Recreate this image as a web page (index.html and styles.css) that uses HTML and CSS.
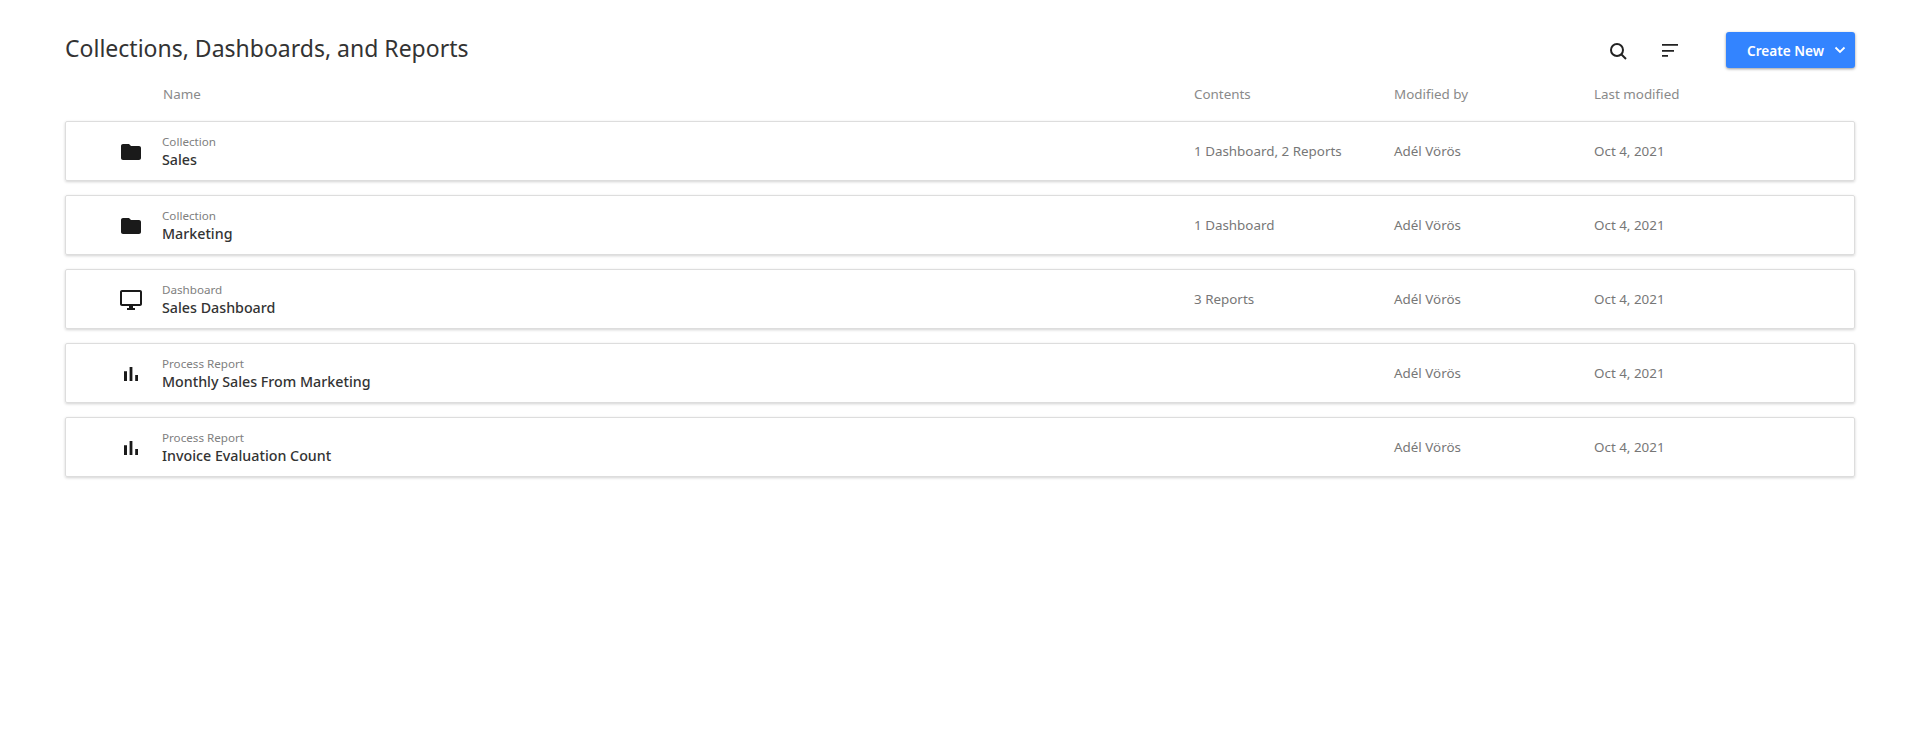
FILE: index.html
```html
<!DOCTYPE html>
<html lang="en">
  <head>
    <meta charset="UTF-8" />
    <meta name="viewport" content="width=device-width, initial-scale=1.0" />
    <title>Collections, Dashboards, and Reports</title>
    <link rel="stylesheet" href="styles.css">
  </head>
  <body>
    <div class="container">
      <div class="top-bar">
        <h1>Collections, Dashboards, and Reports</h1>
        <div class="actions">
          <button class="icon-button search-button" aria-label="Search">
            <svg width="24" height="24" viewBox="0 0 24 24"><circle cx="11" cy="12" r="6" fill="none" stroke="#222" stroke-width="2"/><path d="M15.500 16.500 20 21" fill="none" stroke="#222" stroke-width="2"/></svg>
          </button>
          <button class="icon-button sort-button" aria-label="Sort">
            <svg width="24" height="24" viewBox="0 0 24 24"><path d="M4 6h16v1.800H4zM4 12h12v1.800H4zM4 17h6v1.800H4z" fill="#222"/></svg>
          </button>
          <button class="create-button">
            Create New
            <svg width="16" height="16" viewBox="0 0 16 16"><path d="M3.500 5.500 8 10l4.500-4.500" fill="none" stroke="#fff" stroke-width="1.800"/></svg>
          </button>
        </div>
      </div>

      <div class="row-grid head-row">
        <span>Name</span>
        <span>Contents</span>
        <span>Modified by</span>
        <span>Last modified</span>
      </div>

      <div class="row-grid item">
        <svg class="item-icon" width="24" height="24" viewBox="0 0 24 24"><path d="M10 4H4c-1.100 0-2 .9-2 2v12c0 1.100.9 2 2 2h16c1.100 0 2-.9 2-2V8c0-1.100-.9-2-2-2h-8l-2-2z"/></svg>
        <div class="item-name">
          <small>Collection</small>
          <strong>Sales</strong>
        </div>
        <span>1 Dashboard, 2 Reports</span>
        <span>Adél Vörös</span>
        <span>Oct 4, 2021</span>
      </div>

      <div class="row-grid item">
        <svg class="item-icon" width="24" height="24" viewBox="0 0 24 24"><path d="M10 4H4c-1.100 0-2 .9-2 2v12c0 1.100.9 2 2 2h16c1.100 0 2-.9 2-2V8c0-1.100-.9-2-2-2h-8l-2-2z"/></svg>
        <div class="item-name">
          <small>Collection</small>
          <strong>Marketing</strong>
        </div>
        <span>1 Dashboard</span>
        <span>Adél Vörös</span>
        <span>Oct 4, 2021</span>
      </div>

      <div class="row-grid item">
        <svg class="item-icon" width="24" height="24" viewBox="0 0 24 24"><path d="M21 2H3c-1.100 0-2 .9-2 2v12c0 1.100.9 2 2 2h7v2H8v2h8v-2h-2v-2h7c1.100 0 2-.9 2-2V4c0-1.100-.9-2-2-2zm0 14H3V4h18v12z"/></svg>
        <div class="item-name">
          <small>Dashboard</small>
          <strong>Sales Dashboard</strong>
        </div>
        <span>3 Reports</span>
        <span>Adél Vörös</span>
        <span>Oct 4, 2021</span>
      </div>

      <div class="row-grid item">
        <svg class="item-icon" width="24" height="24" viewBox="0 0 24 24"><path d="M5 9.200h3V19H5zM10.600 5h2.800v14h-2.800zM16.200 13H19v6h-2.800z"/></svg>
        <div class="item-name">
          <small>Process Report</small>
          <strong>Monthly Sales From Marketing</strong>
        </div>
        <span></span>
        <span>Adél Vörös</span>
        <span>Oct 4, 2021</span>
      </div>

      <div class="row-grid item">
        <svg class="item-icon" width="24" height="24" viewBox="0 0 24 24"><path d="M5 9.200h3V19H5zM10.600 5h2.800v14h-2.800zM16.200 13H19v6h-2.800z"/></svg>
        <div class="item-name">
          <small>Process Report</small>
          <strong>Invoice Evaluation Count</strong>
        </div>
        <span></span>
        <span>Adél Vörös</span>
        <span>Oct 4, 2021</span>
      </div>
    </div>
  </body>
</html>
```

FILE: styles.css
```css
body {
  margin: 0;
  background: white;
  font-family: "Noto Sans", Roboto, sans-serif;
  color: #333;
}
.container {
  padding: 32px 65px 0;
}
.top-bar {
  display: flex;
  justify-content: space-between;
  align-items: center;
  height: 36px;
}
h1 {
  margin: 0 0 5px;
  font-size: 23px;
  font-weight: 400;
  color: #333;
}
.actions {
  display: flex;
  align-items: center;
}
.icon-button {
  display: flex;
  padding: 0;
  border: none;
  background: none;
}
.search-button {
  margin-right: 28px;
}
.sort-button {
  margin-right: 44px;
}
.create-button {
  display: flex;
  align-items: center;
  justify-content: space-between;
  width: 129px;
  height: 36px;
  padding: 0 7px 0 21px;
  border: none;
  border-radius: 3px;
  background-color: #3384ff;
  box-shadow: 0px 1px 3px rgba(0, 0, 0, 0.4);
  color: white;
  font-family: inherit;
  font-size: 13.6px;
  font-weight: 600;
}
.row-grid {
  display: grid;
  grid-template-columns: 96px 1032px 200px 200px 1fr;
  align-items: center;
  font-size: 13.4px;
  color: #777;
}
.head-row {
  grid-template-columns: 1129px 200px 200px 1fr;
  height: 34px;
  margin-top: 9px;
  margin-bottom: 10px;
  color: #8a8a8a;
}
.head-row span:first-child {
  padding-left: 98px;
}
.item {
  box-sizing: border-box;
  height: 60px;
  margin-bottom: 14px;
  padding-bottom: 1px;
  border: 1px solid #ddd;
  border-radius: 2px;
  box-shadow: 0px 1px 3px rgba(0, 0, 0, 0.18);
}
.item-icon {
  justify-self: start;
  margin-left: 53px;
  margin-top: 3px;
  fill: #1a1a1a;
}
.item-name {
  margin-top: 1px;
}
.item-name small {
  display: block;
  font-size: 11.650px;
  color: #808080;
}
.item-name strong {
  display: block;
  margin-top: 1px;
  font-size: 14.250px;
  font-weight: 500;
  color: #333;
}
```
